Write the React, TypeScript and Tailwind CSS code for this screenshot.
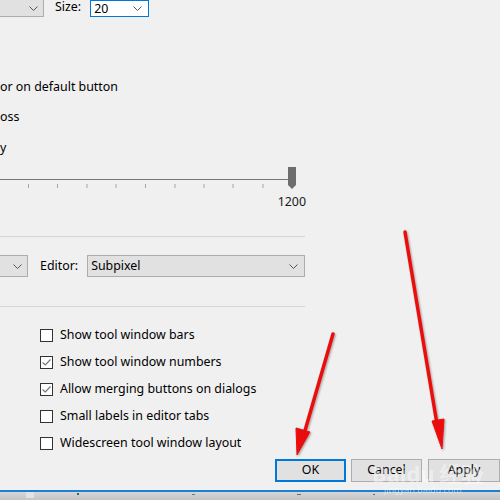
import React from 'react'

const font = { fontFamily: '"Noto Sans", "Liberation Sans", sans-serif' }

function Chevron({ className = '' }: { className?: string }) {
  return (
    <svg width="9" height="5" viewBox="0 0 9 5" className={className}>
      <path d="M0.5 0.5 L4.5 4.5 L8.5 0.5" fill="none" stroke="#555" strokeWidth="1" />
    </svg>
  )
}

function Checkbox({ checked, label }: { checked?: boolean; label: string }) {
  return (
    <div className="flex h-[27px] items-center">
      <div className="flex h-[13px] w-[13px] items-center justify-center border border-[#333333] bg-white">
        {checked && (
          <svg width="9" height="7" viewBox="0 0 9 7">
            <path d="M0.5 3.5 L3.3 6 L8.5 0.5" fill="none" stroke="#777" strokeWidth="1.2" />
          </svg>
        )}
      </div>
      <span className="ml-[7px] text-[12.4px] text-black">{label}</span>
    </div>
  )
}

function Slider() {
  const ticks = [28.5, 57.5, 87, 116, 145.5, 175, 204, 233, 263]
  return (
    <svg width="310" height="32" viewBox="0 0 310 32" className="block">
      <line x1="0" y1="19.5" x2="292" y2="19.5" stroke="#767676" strokeWidth="1" />
      {ticks.map((x) => (
        <line key={x} x1={x} y1="24" x2={x} y2="28" stroke="#a5a5a5" strokeWidth="1" />
      ))}
      <path d="M288 7 H296 V25 L292 29 L288 25 Z" fill="#6d6d6d" />
    </svg>
  )
}

function Arrows() {
  return (
    <svg width="500" height="500" viewBox="0 0 500 500" className="pointer-events-none absolute left-0 top-0">
      <defs>
        <filter id="sh" x="-20%" y="-20%" width="140%" height="140%">
          <feDropShadow dx="1" dy="1" stdDeviation="1" floodColor="#000" floodOpacity="0.35" />
        </filter>
      </defs>
      <g filter="url(#sh)" fill="#ea0f0f" stroke="#ea0f0f">
        <line x1="333" y1="334" x2="304" y2="434" strokeWidth="3.5" strokeLinecap="round" />
        <polygon points="297,455 296,428 310,432" strokeWidth="1" />
        <line x1="405" y1="232" x2="437" y2="424" strokeWidth="3.5" strokeLinecap="round" />
        <polygon points="442,449 432,421 444,419" strokeWidth="1" />
      </g>
    </svg>
  )
}

export default function App() {
  return (
    <div className="relative h-[500px] w-[500px] overflow-hidden bg-[#f0f0f0]" style={font}>
      {/* top row */}
      <div className="flex h-[17px] items-start">
        <div className="flex h-[17px] w-[44px] items-center justify-end border-b border-r border-[#adadad] bg-[#e1e1e1] pr-[5px]">
          <Chevron />
        </div>
        <span className="ml-[11px] text-[12.4px] leading-[14px] text-black">Size:</span>
        <div className="ml-[9px] flex h-[17px] w-[59px] items-center justify-between border border-[#0078d7] bg-white pl-[3px] pr-[6px]">
          <span className="text-[12.4px] leading-[14px] text-black">20</span>
          <Chevron />
        </div>
      </div>

      <div className="mt-[60px] flex h-[20px] items-center text-[12.4px] text-black">or on default button</div>
      <div className="mt-[10px] flex h-[20px] items-center text-[12.4px] text-black">oss</div>
      <div className="mt-[11px] flex h-[20px] items-center text-[12.4px] text-black">y</div>

      <div className="mt-[2px]">
        <Slider />
      </div>
      <div className="mt-[2px] flex h-[16px] w-[306px] items-center justify-end text-[12.4px] text-[#1a1a1a]">1200</div>

      <div className="mt-[26px] h-px w-[305px] bg-[#d5d5d5]" />

      <div className="mt-[18px] flex h-[22px] items-center">
        <div className="flex h-[22px] w-[28px] items-center justify-end border-y border-r border-[#adadad] bg-[#e1e1e1] pr-[5px]">
          <Chevron />
        </div>
        <span className="ml-[12px] text-[12.4px] text-black">Editor:</span>
        <div className="ml-[9px] flex h-[22px] w-[218px] items-center justify-between border border-[#adadad] bg-[#e1e1e1] pl-[3px] pr-[6px]">
          <span className="text-[12.4px] text-black">Subpixel</span>
          <Chevron />
        </div>
      </div>

      <div className="mt-[29px] h-px w-[305px] bg-[#d5d5d5]" />

      <div className="mt-[15px] flex flex-col pl-[40px]">
        <Checkbox label="Show tool window bars" />
        <Checkbox checked label="Show tool window numbers" />
        <Checkbox checked label="Allow merging buttons on dialogs" />
        <Checkbox label="Small labels in editor tabs" />
        <Checkbox label="Widescreen tool window layout" />
      </div>

      <div className="mt-[2px] flex h-[23px] items-stretch pl-[275px]">
        <button className="flex w-[72px] items-center justify-center border-2 border-[#0078d7] bg-[#e1e1e1] text-[12.4px] text-black">OK</button>
        <button className="ml-[5px] flex w-[72px] items-center justify-center border border-[#adadad] bg-[#e1e1e1] text-[12.4px] text-black">Cancel</button>
        <button className="ml-[6px] flex w-[72px] shrink-0 items-center justify-center border border-[#adadad] bg-[#e1e1e1] text-[12.4px] text-black">Apply</button>
      </div>

      <div className="mt-[8px] h-[2px] w-full bg-[#1c7fd6]" />
      <div className="relative h-[8px] w-full bg-gradient-to-b from-[#d6d6d6] to-[#c4c4c4]">
        <div className="absolute left-[26px] top-0 h-[6px] w-[8px] bg-[#e2e2e2]" />
        <div className="absolute left-[77px] top-[1px] h-[2px] w-[2px] bg-[#1d6f6f]" />
        <div className="absolute left-[192px] top-[2px] h-px w-[3px] bg-[#4a8a8a]" />
        <div className="absolute left-[297px] top-[2px] h-px w-[4px] bg-[#4a7a7a]" />
        <div className="absolute left-[373px] top-[2px] h-px w-[2px] bg-[#4a7a7a]" />
      </div>

      <div className="pointer-events-none absolute left-[372px] top-[462px] text-[22px] font-bold leading-none text-white opacity-40">Baidu 经验</div>
      <div className="pointer-events-none absolute left-[384px] top-[485px] text-[9px] leading-none text-white opacity-50">jingyan.baidu.com</div>

      <Arrows />
    </div>
  )
}
